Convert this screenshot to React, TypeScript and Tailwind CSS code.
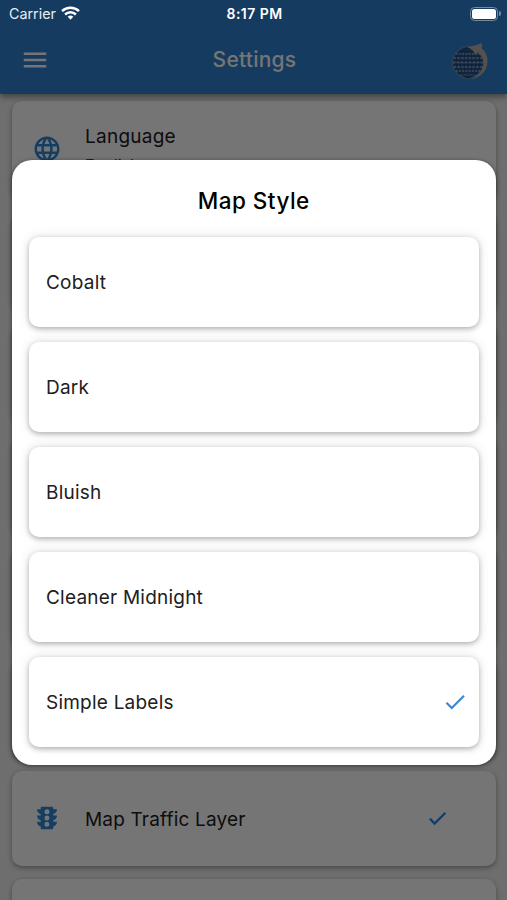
import React from "react";
import { MdCheck, MdLanguage, MdMenu, MdTraffic } from "react-icons/md";

const mapStyles = ["Cobalt", "Dark", "Bluish", "Cleaner Midnight", "Simple Labels"];

function StatusBar() {
  return (
    <div className="absolute inset-x-0 top-0 flex h-[27px] items-center text-white">
      <div className="flex flex-1 items-center gap-[5.5px] pl-[9px]">
        <span className="pt-px text-[14.3px] leading-none text-[#e6edf4]">Carrier</span>
        <svg width="19" height="14" viewBox="0 0 19 14" fill="none" stroke="currentColor" strokeWidth="2.5">
          <path d="M1 5.1a12.4 12.4 0 0 1 17 0" />
          <path d="M4.1 8.5a7.8 7.8 0 0 1 10.8 0" />
          <path d="M6.7 10.7a4.1 4.1 0 0 1 5.6 0L9.5 13.7Z" fill="currentColor" stroke="none" />
        </svg>
      </div>
      <span className="pr-px text-[14px] leading-none font-semibold tracking-[0.45px]">8:17 PM</span>
      <div className="flex flex-1 items-center justify-end gap-px pr-[6px]">
        <div className="h-[14px] w-[28px] rounded-[4.5px] border-[1.5px] border-[#748aa1] p-px">
          <div className="h-full w-full rounded-[2.5px] bg-white" />
        </div>
        <div className="h-[5px] w-[2px] rounded-r-full bg-[#748aa1]" />
      </div>
    </div>
  );
}

function GlobeLogo() {
  return (
    <svg width="44" height="40" viewBox="0 0 44 40" fill="none">
      <path d="M4 19C5 11 10 5 17 4" stroke="#1b93e0" strokeWidth="4" opacity=".3" />
      <circle cx="21" cy="22.5" r="15.7" fill="#3567a6" stroke="#8493a3" strokeWidth="1" />
      <g stroke="#7b9fc8" strokeWidth="1.3">
        <path d="M9 14h24M7 18h29M6 22.5h30M7 27h29M9 31h24M13 35h16" />
      </g>
      <g stroke="#1f3f70" strokeWidth=".9">
        <path d="M21 7v31M8 16h26M6 20.3h30M6 24.8h30M8 29h27M11 33h20M12 11.5h18" />
        <ellipse cx="21" cy="22.5" rx="4" ry="15" />
        <ellipse cx="21" cy="22.5" rx="8" ry="15" />
        <ellipse cx="21" cy="22.5" rx="12" ry="15" />
      </g>
      <path
        d="M19 7C25 6.5 30 5 34.5 3L35 8.5C40 13 42 20 39.5 27C37 34 31 38 24 39C31 36 37 30 36.5 22C36 18 34 15 31 12.5L28 15C27 11 24 8 19 7Z"
        fill="#b9b0a8"
      />
    </svg>
  );
}

export default function App() {
  return (
    <div
      className="relative h-[900px] w-[507px] overflow-hidden bg-[#efefef] text-[#202020]"
      style={{ fontFamily: 'Inter, "Liberation Sans", sans-serif' }}
    >
      <header className="relative z-10 flex h-[94px] items-end bg-[#3080d1] text-white shadow-[0_3px_6px_rgba(0,0,0,0.4)]">
        <div className="flex h-[68px] w-full items-center justify-between pr-4 pl-5">
          <div className="flex w-11">
            <MdMenu size={30} />
          </div>
          <h1 className="pr-0.5 text-[21px] font-medium tracking-[0.25px]">Settings</h1>
          <GlobeLogo />
        </div>
      </header>

      <main className="flex flex-col gap-[13px] pt-[7px] pr-[11px] pl-3">
        <section className="flex h-[98.67px] shrink-0 items-center rounded-[10px] bg-white pl-5 shadow-[0_2px_5px_rgba(0,0,0,0.35)]">
          <MdLanguage size={30} color="#3088d8" className="mb-0.5" />
          <div className="mt-0.5 ml-[23px]">
            <div className="text-[19px] leading-7 tracking-[0.25px]">Language</div>
            <div className="text-[16px] leading-7 text-[#444]">English</div>
          </div>
        </section>
        {[1, 2, 3, 4, 5].map((row) => (
          <section
            key={row}
            className="h-[98.67px] shrink-0 rounded-[10px] bg-white shadow-[0_2px_5px_rgba(0,0,0,0.35)]"
          />
        ))}
        <section className="flex h-[95px] shrink-0 items-center rounded-[10px] bg-white pr-[47px] pl-5 shadow-[0_2px_5px_rgba(0,0,0,0.35)]">
          <MdTraffic size={30} color="#3088d8" />
          <span className="ml-[23px] flex-1 pt-[3px] text-[19px] tracking-[0.17px]">Map Traffic Layer</span>
          <svg width="23" height="23" viewBox="0 0 24 24" fill="none" stroke="#3088d8" strokeWidth="2.5">
            <path d="M4 12.2l5 5L20.3 6" />
          </svg>
        </section>
        <section className="h-[95px] shrink-0 rounded-[10px] bg-white shadow-[0_2px_5px_rgba(0,0,0,0.35)]" />
      </main>

      <div className="absolute inset-0 z-20 bg-black/54" />

      <div className="absolute inset-0 z-30">
        <StatusBar />
        <div
          role="dialog"
          className="absolute top-[160px] left-[11.5px] h-[605px] w-[484.5px] rounded-[20px] bg-white px-[17px] shadow-[0_1px_4px_rgba(0,0,0,0.5)]"
        >
          <h2 className="pt-6 text-center text-[22.5px] leading-[34px] font-medium tracking-[0.45px] text-black">
            Map Style
          </h2>
          <ul className="mt-[19px] flex flex-col gap-[15px]">
            {mapStyles.map((name) => (
              <li
                key={name}
                className="flex h-[90px] items-center justify-between rounded-[10px] bg-white pr-[11px] pl-[17.5px] shadow-[0_2px_5px_rgba(0,0,0,0.25),0_0_12px_rgba(0,0,0,0.12)]"
              >
                <span className="pt-0.5 text-[19px] tracking-[0.22px]">{name}</span>
                {name === "Simple Labels" && <MdCheck size={26} color="#3a86d6" />}
              </li>
            ))}
          </ul>
        </div>
      </div>
    </div>
  );
}
